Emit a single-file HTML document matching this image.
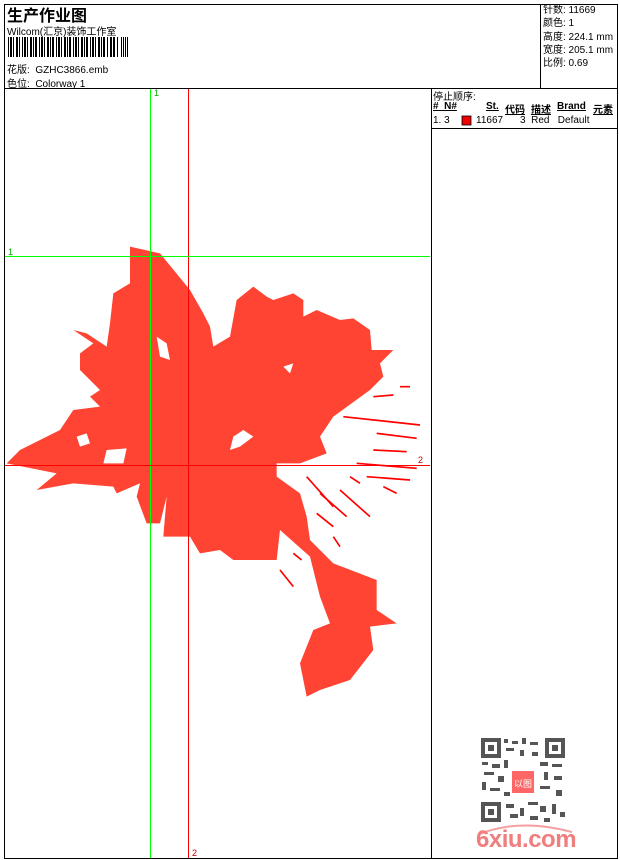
<!DOCTYPE html>
<html><head><meta charset="utf-8"><style>
body{margin:0;background:#fff;width:620px;height:860px;position:relative;overflow:hidden;font-family:"Liberation Sans","Noto Sans CJK SC",sans-serif;color:#000}
.a{position:absolute;white-space:nowrap}
.s{font-size:10px}
</style></head><body>
<svg class="a" style="left:0;top:0" width="620" height="860">
<rect x="4.5" y="4.5" width="613" height="854" fill="none" stroke="#000"/>
<line x1="4" y1="88.5" x2="618" y2="88.5" stroke="#000"/>
<line x1="540.5" y1="4" x2="540.5" y2="88" stroke="#000"/>
<line x1="431.5" y1="88" x2="431.5" y2="858" stroke="#000"/>
<line x1="431" y1="128.5" x2="618" y2="128.5" stroke="#000"/>
<g fill="#000">
<rect x="8" y="37" width="1" height="20"/><rect x="10" y="37" width="2" height="20"/><rect x="13" y="37" width="1" height="20"/><rect x="16" y="37" width="2" height="20"/><rect x="19" y="37" width="1" height="20"/><rect x="22" y="37" width="1" height="20"/><rect x="24" y="37" width="2" height="20"/><rect x="27" y="37" width="1" height="20"/><rect x="30" y="37" width="2" height="20"/><rect x="33" y="37" width="1" height="20"/><rect x="35" y="37" width="2" height="20"/><rect x="39" y="37" width="1" height="20"/><rect x="41" y="37" width="2" height="20"/><rect x="44" y="37" width="1" height="20"/><rect x="47" y="37" width="2" height="20"/><rect x="50" y="37" width="1" height="20"/><rect x="52" y="37" width="2" height="20"/><rect x="56" y="37" width="1" height="20"/><rect x="58" y="37" width="2" height="20"/><rect x="61" y="37" width="1" height="20"/><rect x="64" y="37" width="2" height="20"/><rect x="67" y="37" width="1" height="20"/><rect x="69" y="37" width="2" height="20"/><rect x="73" y="37" width="1" height="20"/><rect x="75" y="37" width="2" height="20"/><rect x="78" y="37" width="1" height="20"/><rect x="81" y="37" width="2" height="20"/><rect x="84" y="37" width="1" height="20"/><rect x="86" y="37" width="2" height="20"/><rect x="90" y="37" width="1" height="20"/><rect x="92" y="37" width="2" height="20"/><rect x="95" y="37" width="1" height="20"/><rect x="98" y="37" width="2" height="20"/><rect x="101" y="37" width="1" height="20"/><rect x="103" y="37" width="2" height="20"/><rect x="107" y="37" width="1" height="20"/><rect x="110" y="37" width="2" height="20"/><rect x="113" y="37" width="2" height="20"/><rect x="117" y="37" width="1" height="20"/><rect x="121" y="37" width="1" height="20"/><rect x="123" y="37" width="1" height="20"/><rect x="125" y="37" width="1" height="20"/><rect x="127" y="37" width="1" height="20"/>
</g>
<g transform="translate(0 230) scale(0.33333)">
<path fill="#f43" d="M390,50 L480,70 570,180 610,250 630,290 640,350 690,320 710,210 760,170 800,200 820,210 880,190 910,210 910,260 950,240 1020,270 1060,265 1110,300 1115,360 1180,360 1140,400 1150,440 1110,480 1000,560 960,620 980,670 900,700 830,700 830,740 900,790 920,860 930,930 1000,1000 1130,1050 1130,1140 1190,1180 1110,1190 1120,1260 1050,1350 960,1380 920,1400 900,1300 940,1200 990,1180 960,1100 930,980 840,900 830,990 700,990 660,960 600,970 570,920 490,920 500,800 480,880 440,880 410,800 420,760 350,790 340,770 220,760 110,780 170,730 20,700 60,660 180,600 220,540 300,530 270,500 300,480 240,420 240,370 280,340 220,300 260,310 320,350 330,280 340,190 390,160 390,100Z"/>
<path fill="#fff" d="M470,320 L500,340 510,390 480,380Z M230,620 L260,610 270,640 240,650Z M320,660 L380,655 370,700 310,700Z M700,620 L730,600 760,620 720,650 690,660Z M850,410 L880,400 870,430Z"/>
<g stroke="#f00" stroke-width="5" fill="none">
<path d="M1030,560 L1260,585 M1120,500 L1180,495 M1200,470 L1230,470 M1130,610 L1250,625 M1120,660 L1220,665 M1070,700 L1250,715 M1100,740 L1230,750 M1150,770 L1190,790 M920,740 L1000,830 M960,790 L1040,860 M1020,780 L1110,860 M950,850 L1000,890 M1000,920 L1020,950 M840,1020 L880,1070 M880,970 L905,990 M1050,740 L1080,760"/>
</g>
</g>
<line x1="150.5" y1="89" x2="150.5" y2="858" stroke="#0f0"/>
<line x1="188.5" y1="89" x2="188.5" y2="858" stroke="#f00"/>
<line x1="5" y1="256.5" x2="430" y2="256.5" stroke="#0f0"/>
<line x1="5" y1="465.5" x2="430" y2="465.5" stroke="#f00"/>
<text x="154" y="96" font-size="9" fill="#0a0" font-family="Liberation Sans">1</text>
<text x="8" y="255" font-size="9" fill="#0a0" font-family="Liberation Sans">1</text>
<text x="418" y="463" font-size="9" fill="#c00" font-family="Liberation Sans">2</text>
<text x="192" y="856" font-size="9" fill="#c00" font-family="Liberation Sans">2</text>
<rect x="462" y="116" width="9" height="9" fill="#e00" stroke="#000" stroke-width="0.8"/>
<g fill="#555">
<rect x="481" y="738" width="84" height="84" fill="#fff"/>
<path d="M481,738h20v20h-20z M485,742v12h12v-12z" fill-rule="evenodd"/><rect x="488" y="745" width="6" height="6"/>
<path d="M545,738h20v20h-20z M549,742v12h12v-12z" fill-rule="evenodd"/><rect x="552" y="745" width="6" height="6"/>
<path d="M481,802h20v20h-20z M485,806v12h12v-12z" fill-rule="evenodd"/><rect x="488" y="809" width="6" height="6"/>
<rect x="504" y="739" width="4" height="4"/><rect x="512" y="741" width="6" height="3"/><rect x="522" y="738" width="4" height="6"/><rect x="530" y="742" width="8" height="3"/><rect x="506" y="748" width="8" height="3"/><rect x="520" y="750" width="4" height="6"/><rect x="532" y="752" width="6" height="4"/>
<rect x="482" y="762" width="6" height="3"/><rect x="492" y="764" width="8" height="4"/><rect x="504" y="760" width="4" height="8"/><rect x="484" y="772" width="10" height="3"/><rect x="498" y="776" width="6" height="6"/><rect x="482" y="782" width="4" height="8"/><rect x="490" y="788" width="10" height="3"/><rect x="504" y="792" width="6" height="4"/>
<rect x="540" y="762" width="8" height="4"/><rect x="552" y="764" width="10" height="3"/><rect x="544" y="772" width="4" height="8"/><rect x="554" y="776" width="8" height="4"/><rect x="540" y="786" width="10" height="3"/><rect x="556" y="790" width="6" height="6"/>
<rect x="506" y="804" width="8" height="4"/><rect x="520" y="808" width="4" height="8"/><rect x="528" y="802" width="10" height="3"/><rect x="540" y="806" width="6" height="6"/><rect x="552" y="804" width="4" height="10"/><rect x="560" y="812" width="5" height="5"/><rect x="510" y="814" width="8" height="4"/><rect x="530" y="816" width="8" height="4"/><rect x="544" y="818" width="6" height="4"/>
</g>
<rect x="512" y="771" width="22" height="22" fill="#f66"/>
<text x="523" y="787" font-size="9" fill="#fff" text-anchor="middle" font-family="Noto Sans CJK SC">以图</text>
<path d="M480,834 Q520,818 572,832" stroke="#f4a0a0" stroke-width="2" fill="none"/>
</svg>
<div class="a" style="left:7px;top:2px;font-size:16px;font-weight:bold">生产作业图</div>
<div class="a s" style="left:7px;top:23px">Wilcom(汇京)装饰工作室</div>
<div class="a s" style="left:7px;top:61px">花版:&nbsp; GZHC3866.emb</div>
<div class="a s" style="left:7px;top:75px">色位:&nbsp; Colorway 1</div>
<div class="a s" style="left:543px;top:4px;line-height:13.3px">针数: 11669<br>颜色: 1<br>高度: 224.1 mm<br>宽度: 205.1 mm<br>比例: 0.69</div>
<div class="a s" style="left:433px;top:88px">停止顺序:</div>
<div class="a s" style="left:433px;top:101px;font-weight:bold;text-decoration:underline">#&nbsp;&nbsp;N#</div>
<div class="a s" style="left:486px;top:101px;font-weight:bold;text-decoration:underline">St.</div>
<div class="a s" style="left:505px;top:101px;font-weight:bold;text-decoration:underline">代码</div>
<div class="a s" style="left:531px;top:101px;font-weight:bold;text-decoration:underline">描述</div>
<div class="a s" style="left:557px;top:101px;font-weight:bold;text-decoration:underline">Brand</div>
<div class="a s" style="left:593px;top:101px;font-weight:bold;text-decoration:underline">元素</div>
<div class="a s" style="left:433px;top:115px">1. 3</div>
<div class="a s" style="left:476px;top:115px">11667</div>
<div class="a s" style="left:520px;top:115px">3&nbsp; Red&nbsp;&nbsp; Default</div>
<div class="a" style="left:476px;top:826px;font-size:24px;font-weight:bold;color:#f07e7e;letter-spacing:-0.5px">6xiu.com</div>
</body></html>
